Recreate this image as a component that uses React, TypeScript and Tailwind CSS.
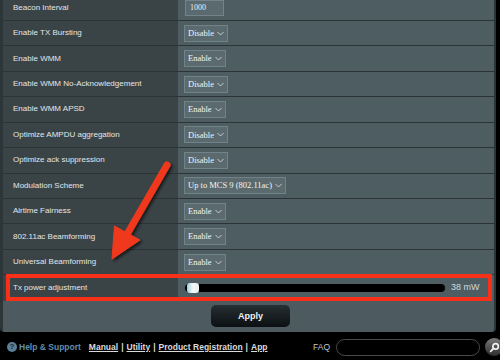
import React from "react";

type Row = { label: string; kind: "input" | "select"; value: string };

const rows: Row[] = [
  { label: "Beacon Interval", kind: "input", value: "1000" },
  { label: "Enable TX Bursting", kind: "select", value: "Disable" },
  { label: "Enable WMM", kind: "select", value: "Enable" },
  { label: "Enable WMM No-Acknowledgement", kind: "select", value: "Disable" },
  { label: "Enable WMM APSD", kind: "select", value: "Enable" },
  { label: "Optimize AMPDU aggregation", kind: "select", value: "Disable" },
  { label: "Optimize ack suppression", kind: "select", value: "Disable" },
  { label: "Modulation Scheme", kind: "select", value: "Up to MCS 9 (802.11ac)" },
  { label: "Airtime Fairness", kind: "select", value: "Enable" },
  { label: "802.11ac Beamforming", kind: "select", value: "Enable" },
  { label: "Universal Beamforming", kind: "select", value: "Enable" },
];

function Chevron() {
  return (
    <svg width="7" height="5" viewBox="0 0 7 5" fill="none" stroke="#cfd8db" strokeWidth="0.9">
      <path d="M0.5 1 L3.5 4 L6.5 1" />
    </svg>
  );
}

function Field({ row }: { row: Row }) {
  if (row.kind === "input") {
    return (
      <div className="ml-[7px] w-[39px] h-[16px] flex items-center pl-[4px] bg-[#5a6a6f] border border-[#72848a] text-[8px] text-[#eef2f3] font-['Liberation_Serif',serif]">
        {row.value}
      </div>
    );
  }
  return (
    <div className="ml-[6px] h-[17px] flex items-center gap-[3px] pl-[3px] pr-[3px] bg-[#5a6a6f] border border-[#718388] text-[8.5px] text-[#f2f5f6] font-['Liberation_Serif',serif]">
      <span>{row.value}</span>
      <Chevron />
    </div>
  );
}

export default function App() {
  return (
    <div className="relative w-[500px] h-[360px] overflow-hidden bg-black font-['Liberation_Sans',Arial,sans-serif]">
      <div className="mr-[4px] bg-[#4d5b60] border-l-[3px] border-r-[2px] border-[#2c3538] rounded-b-[4px] overflow-hidden">
        <div className="-mt-[4.5px]">
          {rows.map((r) => (
            <div key={r.label} className="grid grid-cols-[175px_1fr] h-[25.45px] border-b border-[#2b3336]">
              <div className="bg-[#3a4447] flex items-center pl-[10px] text-[8px] text-[#e2e6e7]">
                {r.label}
              </div>
              <div className="bg-[#4e5d62] flex items-center">
                <Field row={r} />
              </div>
            </div>
          ))}
          <div className="relative grid grid-cols-[175px_1fr] h-[25.45px]">
            <div className="bg-[#3a4447] flex items-center pl-[10px] text-[8px] text-[#e2e6e7]">
              Tx power adjustment
            </div>
            <div className="bg-[#4e5d62] flex items-center">
              <div className="relative ml-[7px] w-[260px] h-[8px] rounded-full bg-black">
                <div className="absolute left-[2px] -top-[1px] w-[12px] h-[10px] rounded-[3px] bg-gradient-to-r from-[#9fd0e0] via-[#f4f8fa] to-[#e6eced]" />
              </div>
              <span className="ml-[6px] text-[9px] text-[#d4d9db]">38 mW</span>
            </div>
            <div className="absolute left-[3px] right-[2px] -top-[1px] bottom-0 border-[4px] border-[#f7301a]" />
          </div>
        </div>
        <div className="h-[31px] flex items-center justify-center">
          <button className="ml-[4px] w-[79px] h-[22px] rounded-[5px] bg-gradient-to-b from-[#263034] to-[#0c1012] text-[9px] font-bold text-[#eef1f2]">
            Apply
          </button>
        </div>
      </div>

      <div className="h-[28px] pt-[3px] flex items-center pl-[7px] text-[8.5px]">
        <div className="w-[10px] h-[10px] rounded-full bg-[#5c7f99] flex items-center justify-center text-[8px] font-bold text-[#1a2630]">
          ?
        </div>
        <span className="ml-[2px] font-bold text-[#5f8dad]">Help &amp; Support</span>
        <div className="ml-[8px] flex items-center gap-[3px] font-bold text-[#dadada]">
          <span className="underline">Manual</span>
          <span>|</span>
          <span className="underline">Utility</span>
          <span>|</span>
          <span className="underline">Product Registration</span>
          <span>|</span>
          <span className="underline">App</span>
        </div>
        <span className="ml-auto text-[8.5px] text-[#c4c4c4]">FAQ</span>
        <div className="ml-[6px] w-[144px] h-[17px] rounded-full border border-[#4a4a4a] bg-black" />
        <div className="ml-[5px] -mr-[3px] w-[18px] h-[18px] rounded-full bg-gradient-to-b from-[#7a7a7a] to-[#2e2e2e] flex items-center justify-center">
          <svg width="11" height="11" viewBox="0 0 12 12" fill="none" stroke="#f2f2f2" strokeWidth="1.8" strokeLinecap="round">
            <circle cx="7.2" cy="4.8" r="3" />
            <path d="M5 7 L1.8 10.2" />
          </svg>
        </div>
      </div>

      <svg className="absolute inset-0 pointer-events-none" width="500" height="360" viewBox="0 0 500 360">
        <defs>
          <filter id="sh" x="-50%" y="-50%" width="200%" height="200%">
            <feDropShadow dx="2" dy="2" stdDeviation="1.5" floodColor="#000" floodOpacity="0.6" />
          </filter>
        </defs>
        <g filter="url(#sh)" fill="#f0391f" stroke="#f0391f">
          <line x1="167" y1="165" x2="126" y2="236" strokeWidth="7" strokeLinecap="round" />
          <polygon points="112,259 114.5,226 140,240" strokeWidth="1" strokeLinejoin="round" />
        </g>
      </svg>
    </div>
  );
}
